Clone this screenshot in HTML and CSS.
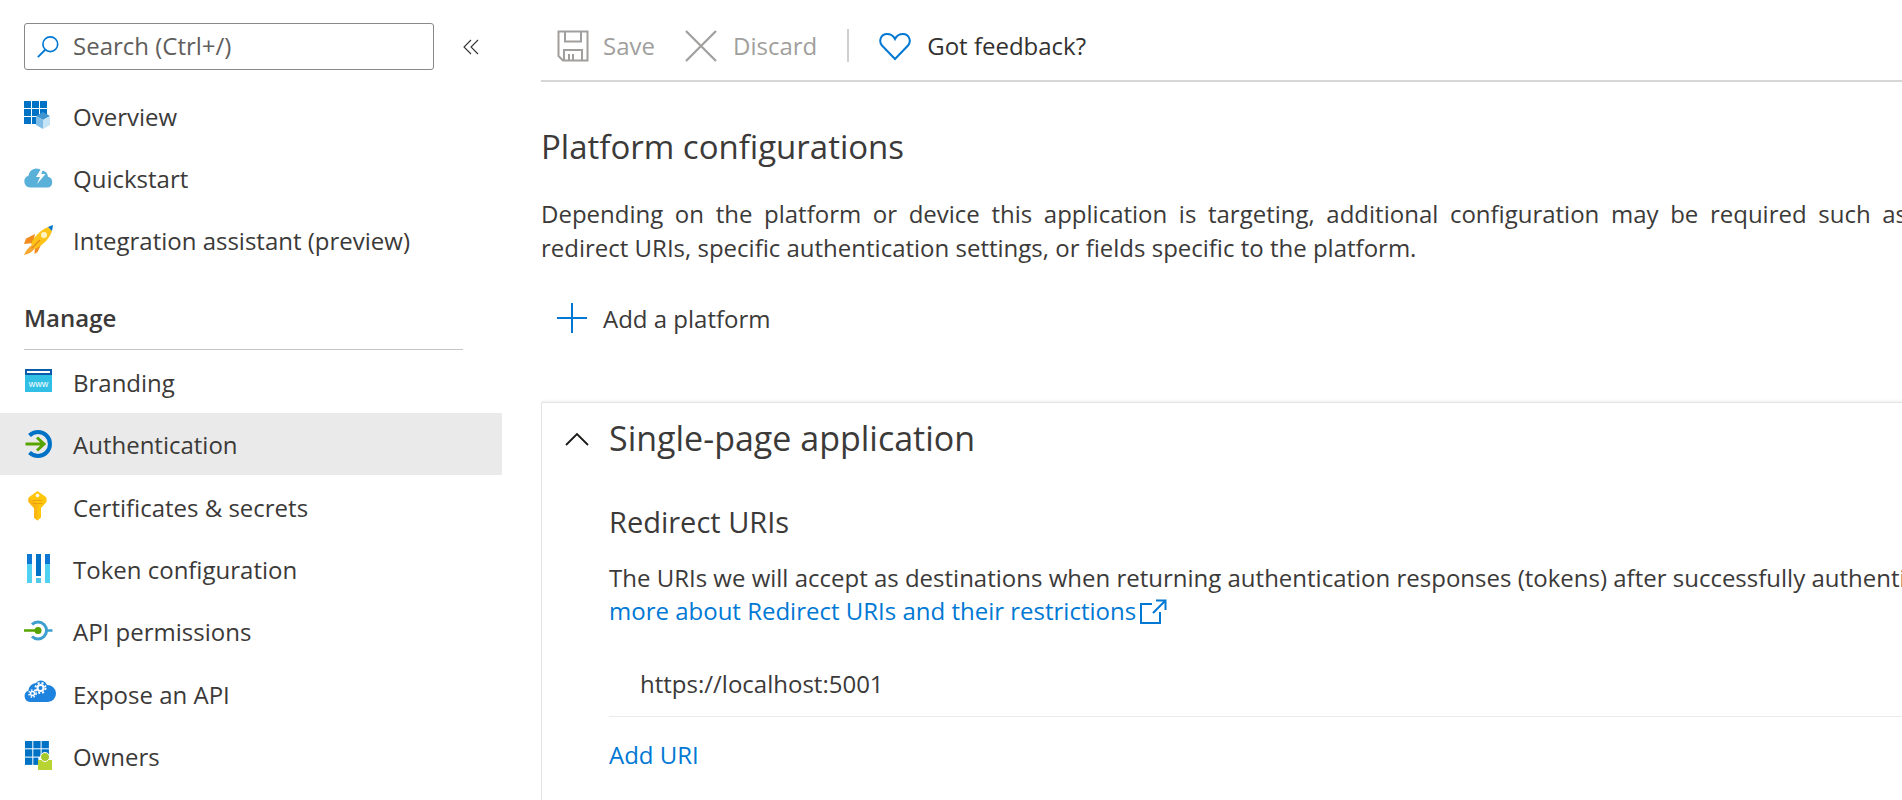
FILE: index.html
```html
<!DOCTYPE html>
<html lang="en">
<head>
<meta charset="utf-8">
<title>Authentication</title>
<link rel="stylesheet" href="styles.css">
</head>
<body>
<aside class="sidebar">
  <div class="search-row">
    <div class="search">
      <svg class="search-icon" viewBox="0 0 26 26"><circle cx="15.500" cy="10" r="8" fill="none" stroke="#0078d4" stroke-width="1.800"/><path d="M10 16L2 24" stroke="#0078d4" stroke-width="2" fill="none"/></svg>
      <span>Search (Ctrl+/)</span>
    </div>
    <svg class="collapse" viewBox="0 0 16 16"><path d="M8 1L1 8l7 7M15 1L8 8l7 7" fill="none" stroke="#323130" stroke-width="1.100"/></svg>
  </div>
  <nav>
    <a class="row">
      <svg class="icon" viewBox="0 0 30 30">
        <g fill="#0072c6"><rect x="0" y="0" width="7" height="7"/><rect x="8" y="0" width="7" height="7"/><rect x="16" y="0" width="7" height="7"/><rect x="0" y="8" width="7" height="7"/><rect x="8" y="8" width="7" height="7"/><rect x="16" y="8" width="7" height="7"/><rect x="0" y="16" width="7" height="7"/><rect x="8" y="16" width="5" height="7"/></g>
        <path d="M12 15l7-4 7 4-7 4z" fill="#3f95d0"/><path d="M12 15l7 4v9l-7-4z" fill="#7fbde6"/><path d="M26 15l-7 4v9l7-4z" fill="#c4e3f5"/>
      </svg>
      <span>Overview</span>
    </a>
    <a class="row">
      <svg class="icon" viewBox="0 0 30 30">
        <path d="M6 23.500a6 6 0 0 1-1.500-11.700A8 8 0 0 1 12 4.500c2.500 0 4 .8 5.500 2a6.500 6.500 0 0 1 6.500 6.300A5.500 5.500 0 0 1 24 23.500z" fill="#59b0d9"/>
        <path d="M18.500 2.500l-6.500 10.500h4l-3 7 8.500-10h-4.300l3-7.500z" fill="#fff"/>
      </svg>
      <span>Quickstart</span>
    </a>
    <a class="row">
      <svg class="icon" viewBox="0 0 30 30">
        <path d="M11 8L2 12.500 0 18l9-1zM18 17l-4.500 9-3 2 .5-9z" fill="#f28c1e"/>
        <path d="M8 19c-3 2-6 5-8 10 5-1 8-3 11-7z" fill="#f7a72e"/>
        <path d="M7 18C10 10 17 4 24 1l4 4C26 12 19 19 11 23z" fill="#fcc419"/>
        <path d="M24 1l5-2-1 6z" fill="#0072c6"/>
        <circle cx="20" cy="9" r="3" fill="#fff3c4"/>
        <path d="M8 22l8-8" stroke="#e8891b" stroke-width="1.500"/>
      </svg>
      <span>Integration assistant (preview)</span>
    </a>
    <div class="section">Manage</div>
    <a class="row">
      <svg class="icon" viewBox="0 0 30 30">
        <rect x="1" y="3" width="27" height="23" fill="#32bfe6"/>
        <rect x="1" y="3" width="27" height="6" fill="#0a5ba8"/>
        <rect x="3" y="5" width="23" height="2" fill="#fff"/>
        <text x="14.500" y="20.500" class="www">www</text>
      </svg>
      <span>Branding</span>
    </a>
    <a class="row active">
      <svg class="icon" viewBox="0 0 30 30">
        <path d="M5.500 6.500A12 12 0 1 1 5.500 23.500" fill="none" stroke="#0072c6" stroke-width="4"/>
        <path d="M1.500 15H20M13 8.500L20 15l-7 6.500" fill="none" stroke="#57a300" stroke-width="3"/>
      </svg>
      <span>Authentication</span>
    </a>
    <a class="row">
      <svg class="icon" viewBox="0 0 30 30">
        <path d="M13.500 0l9 6.500V11l-5.500 6v9.500l-3.500 3-3.500-3v-9.500L4.500 11V6.500z" fill="#ffc60b"/>
        <path d="M4.500 7l9 5v17.500l-3.500-3v-9.500L4.500 11z" fill="#fcb614"/>
        <circle cx="13.500" cy="4.500" r="1.800" fill="#fff"/>
        <path d="M8.500 9.500h10M8.500 12.500h10" stroke="#e9a30e" stroke-width="1"/>
      </svg>
      <span>Certificates &amp; secrets</span>
    </a>
    <a class="row">
      <svg class="icon" viewBox="0 0 30 30">
        <rect x="3" y="0" width="5" height="10" fill="#0f78d4"/><rect x="3" y="10" width="5" height="19" fill="#50d1f2"/>
        <rect x="12" y="0" width="5" height="22" fill="#0072c6"/><rect x="12" y="24" width="5" height="5" fill="#50c8ea"/>
        <rect x="21" y="0" width="5" height="10" fill="#0f78d4"/><rect x="21" y="10" width="5" height="19" fill="#50d1f2"/>
      </svg>
      <span>Token configuration</span>
    </a>
    <a class="row">
      <svg class="icon" viewBox="0 0 30 30">
        <path d="M8 8.500A8.500 8.500 0 1 1 8 20.500" fill="none" stroke="#3d9fcf" stroke-width="3"/>
        <path d="M21 14.500h7.500" stroke="#3d9fcf" stroke-width="2.500"/>
        <path d="M0 14.500h14" stroke="#57a300" stroke-width="2.500"/>
        <circle cx="14" cy="14.500" r="3.500" fill="#57a300"/>
      </svg>
      <span>API permissions</span>
    </a>
    <a class="row">
      <svg class="icon" viewBox="0 0 30 30">
        <path d="M6 24a6 6 0 0 1-1.500-11.600A8 8 0 0 1 12 5c2.200-3 8-4 11 2a7 7 0 0 1 1 17z" fill="#1e83de"/>
        <circle cx="16.500" cy="10" r="3" fill="none" stroke="#fff" stroke-width="2"/>
        <circle cx="16.500" cy="10" r="5" fill="none" stroke="#fff" stroke-width="2" stroke-dasharray="2 2"/>
        <circle cx="8.500" cy="15.500" r="2" fill="none" stroke="#fff" stroke-width="1.500"/>
        <circle cx="8.500" cy="15.500" r="3.600" fill="none" stroke="#fff" stroke-width="1.500" stroke-dasharray="1.500 1.500"/>
      </svg>
      <span>Expose an API</span>
    </a>
    <a class="row">
      <svg class="icon" viewBox="0 0 30 30">
        <g fill="#0072c6"><rect x="1" y="0" width="7.300" height="7.300"/><rect x="9.300" y="0" width="7.300" height="7.300"/><rect x="17.600" y="0" width="7.300" height="7.300"/><rect x="1" y="8.300" width="7.300" height="7.300"/><rect x="9.300" y="8.300" width="7.300" height="7.300"/><rect x="17.600" y="8.300" width="7.300" height="7.300"/><rect x="1" y="16.600" width="7.300" height="7.300"/><rect x="9.300" y="16.600" width="5" height="7.300"/></g>
        <rect x="14" y="19" width="14" height="10" fill="#b8d432"/>
        <circle cx="21" cy="16" r="4.500" fill="#a5c82c" stroke="#fff" stroke-width="1"/>
      </svg>
      <span>Owners</span>
    </a>
  </nav>
</aside>
<main class="main">
  <div class="toolbar">
    <button class="tool disabled">
      <svg class="tool-icon" viewBox="0 0 32 32"><path d="M1.500 1.500h29v29H6l-4.500-4.500zM8 1.500v10h16v-10M7 30.500V20h18v10.500M12 24v6.500h4V24" fill="none" stroke="#a19f9d" stroke-width="2"/></svg>
      <span>Save</span>
    </button>
    <button class="tool disabled discard">
      <svg class="tool-icon" viewBox="0 0 32 32"><path d="M1 1l30 30M31 1L1 31" fill="none" stroke="#a19f9d" stroke-width="2.200"/></svg>
      <span>Discard</span>
    </button>
    <i class="tool-sep"></i>
    <button class="tool feedback">
      <svg class="tool-icon" viewBox="0 0 32 32"><path d="M16 29L3 15.500C-.5 11.500 1.500 4 8 4c3.500 0 6.500 2 8 5 1.500-3 4.500-5 8-5 6.500 0 8.500 7.500 5 11.500z" fill="none" stroke="#0078d4" stroke-width="2"/></svg>
      <span>Got feedback?</span>
    </button>
  </div>
  <h1 class="title">Platform configurations</h1>
  <p class="desc">Depending on the platform or device this application is targeting, additional configuration may be required such as redirect URIs, specific authentication settings, or fields specific to the platform.</p>
  <button class="add-platform">
    <svg class="plus" viewBox="0 0 30 30"><path d="M15 0v30M0 15h30" stroke="#0078d4" stroke-width="2" fill="none"/></svg>
    <span>Add a platform</span>
  </button>
  <section class="card">
    <header class="card-head">
      <svg class="chevron" viewBox="0 0 24 14"><path d="M1 13L12 2l11 11" fill="none" stroke="#1b1a19" stroke-width="1.800"/></svg>
      <h2>Single-page application</h2>
    </header>
    <div class="card-body">
      <h3>Redirect URIs</h3>
      <p class="uri-text">The URIs we will accept as destinations when returning authentication responses (tokens) after successfully authenticating users. Learn<br><a class="link">more about Redirect URIs and their restrictions<svg class="ext" viewBox="0 0 28 26"><path d="M13 5H2v19h19V13M14 14L26 2M17 1.500h9.500V11" fill="none" stroke="#0078d4" stroke-width="2"/></svg></a></p>
      <div class="uri">https://localhost:5001</div>
      <a class="link add-uri">Add URI</a>
    </div>
  </section>
</main>
</body>
</html>
```
FILE: styles.css
```css
* { box-sizing: border-box; }
html, body { margin: 0; height: 800px; overflow: hidden; background: #fff; }
body {
  display: flex;
  font-family: "Open Sans", "Noto Sans", sans-serif;
  font-size: 24px;
  color: #3b3a39;
}
.sidebar { width: 502px; flex: none; }
.search-row { display: flex; align-items: center; padding: 23px 0 0 24px; margin-bottom: 15px; }
.search {
  width: 410px; height: 47px; display: flex; align-items: center;
  border: 1px solid #8a8886; border-radius: 3px; color: #605e5c; padding: 0 0 2px 11px;
}
.search-icon { width: 24px; height: 26px; margin: 2px 13px 0 0; flex: none; }
.collapse { width: 16px; height: 16px; margin-left: 29px; }
.row { display: flex; align-items: center; height: 62.4px; padding-left: 24px; }
.row.active { background: #ebeaea; }
.section ~ .row span { padding-top: 2px; }
.icon { width: 30px; height: 30px; margin-right: 19px; flex: none; overflow: visible; }
.www { font-family: "Liberation Sans", sans-serif; font-size: 9px; fill: #fff; text-anchor: middle; }
.section {
  margin: 0 39px 0 24px; height: 78px; padding-top: 28px; line-height: 36px;
  font-weight: 600; border-bottom: 1px solid #c8c6c4; font-size: 24px;
}
.main { flex: 1; min-width: 0; margin-left: 39px; overflow: hidden; }
.toolbar { display: flex; align-items: center; height: 82px; border-bottom: 2px solid #d6d6d6; padding: 11px 0 0 16px; }
.tool { display: flex; align-items: center; border: 0; background: none; padding: 0; font: inherit; color: #323130; }
.tool.disabled { color: #a19f9d; }
.tool-icon { width: 32px; height: 32px; margin-right: 14px; flex: none; }
.discard { margin-left: 30px; }
.discard .tool-icon { margin-right: 16px; }
.tool-sep { width: 2px; height: 33px; background: #cfcfcf; margin: 0 30px; }
.feedback .tool-icon { margin-right: 16px; }
.title { font-size: 33px; font-weight: 400; line-height: 44px; margin: 43px 0 0; }
.desc { width: 1366px; margin: 28px 0 0; line-height: 33.5px; text-align: justify; }
.add-platform { display: flex; align-items: center; border: 0; background: none; padding: 0 0 0 16px; font: inherit; color: inherit; margin-top: 34px; height: 40px; }
.plus { width: 30px; height: 30px; margin-right: 16px; }
.card { width: 1500px; height: 420px; margin-top: 64px; border: 1px solid #e3e3e3; box-shadow: 0 0 4px rgba(0,0,0,.1); padding: 0 0 0 67px; }
.card-head { display: flex; align-items: center; height: 71px; }
.chevron { width: 24px; height: 14px; margin-left: -44px; margin-right: 20px; }
.card-head h2 { font-size: 34px; font-weight: 400; margin: 0; line-height: 71px; }
.card-body h3 { font-size: 29px; font-weight: 400; margin: 30px 0 0; line-height: 36px; }
.uri-text { margin: 21px 0 0; line-height: 33px; white-space: nowrap; }
.link { color: #0078d4; }
.ext { width: 28px; height: 26px; margin-left: 3px; vertical-align: -5px; }
.uri { padding-left: 31px; margin-top: 33px; height: 57px; line-height: 48px; border-bottom: 1px solid #edebe9; }
.add-uri { display: block; margin-top: 21px; line-height: 34px; }
```
